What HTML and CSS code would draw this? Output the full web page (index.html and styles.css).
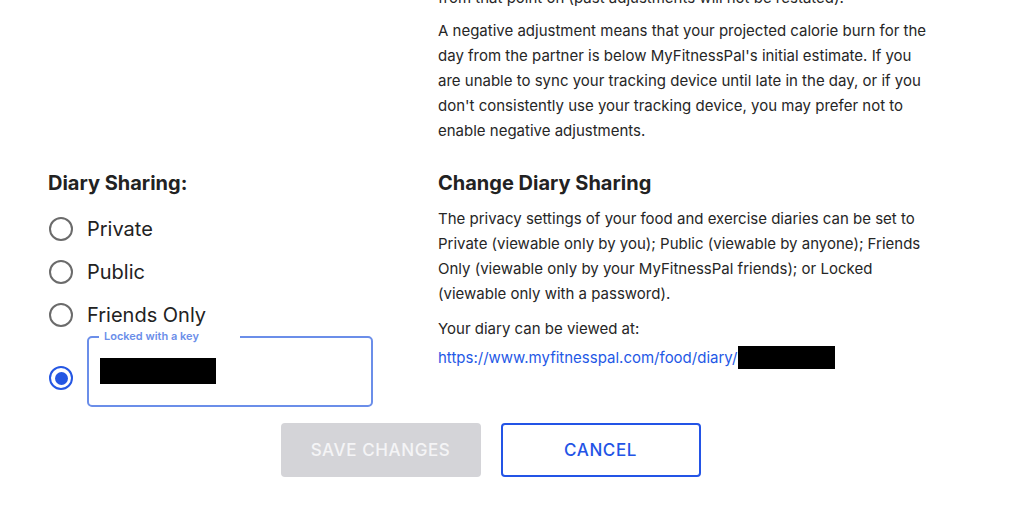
FILE: index.html
```html
<!DOCTYPE html>
<html lang="en">
<head>
<meta charset="utf-8">
<title>Diary Settings</title>
<link rel="stylesheet" href="styles.css">
</head>
<body>
<main class="page">
  <section class="row row-first">
    <div class="col-left"></div>
    <div class="col-right">
      <p class="text cut">from that point on (past adjustments will not be restated).</p>
      <p class="text">A negative adjustment means that your projected calorie burn for the day from the partner is below MyFitnessPal's initial estimate. If you are unable to sync your tracking device until late in the day, or if you don't consistently use your tracking device, you may prefer not to enable negative adjustments.</p>
    </div>
  </section>
  <section class="row">
    <div class="col-left">
      <h3 class="label-title">Diary Sharing:</h3>
      <div class="options">
        <label class="option"><span class="radio"></span><span class="option-text">Private</span></label>
        <label class="option"><span class="radio"></span><span class="option-text">Public</span></label>
        <label class="option"><span class="radio"></span><span class="option-text">Friends Only</span></label>
        <div class="option option-locked">
          <span class="radio radio-on"><span class="dot"></span></span>
          <fieldset class="key-field">
            <legend class="key-legend">Locked with a key</legend>
            <div class="redact redact-key"></div>
          </fieldset>
        </div>
      </div>
    </div>
    <div class="col-right">
      <h2 class="section-title">Change Diary Sharing</h2>
      <p class="text">The privacy settings of your food and exercise diaries can be set to Private (viewable only by you); Public (viewable by anyone); Friends Only (viewable only by your MyFitnessPal friends); or Locked (viewable only with a password).</p>
      <p class="text text-tight">Your diary can be viewed at:</p>
      <p class="text link-line"><a class="link" href="#">https://www.myfitnesspal.com/food/diary/</a><span class="redact redact-url"></span></p>
    </div>
  </section>
  <div class="actions">
    <button class="btn btn-save" type="button">Save Changes</button>
    <button class="btn btn-cancel" type="button">Cancel</button>
  </div>
</main>
</body>
</html>
```

FILE: styles.css
```css
* { box-sizing: border-box; }

body {
  margin: 0;
  background: #ffffff;
  font-family: Inter, "Noto Sans", "Liberation Sans", sans-serif;
  color: #222222;
}

.page {
  width: 885px;
  margin-left: 48px;
}

.row {
  display: grid;
  grid-template-columns: 390px 495px;
}

.row-first {
  margin-bottom: 28px;
}

.text {
  margin: 0;
  font-size: 15px;
  line-height: 25px;
  color: #262626;
}

.text + .text {
  margin-top: 8px;
}

.cut {
  margin-top: -15px;
}

.section-title {
  margin: 0 0 11px;
  font-size: 20px;
  line-height: 24px;
  font-weight: 700;
  color: #222;
}

.col-right .text-tight {
  margin-top: 10px;
}

.col-right .link-line {
  margin-top: 4px;
  display: flex;
  align-items: center;
}

.link {
  color: #1f59e6;
  text-decoration: none;
}

.redact {
  display: block;
  background: #000;
}

.redact-url {
  width: 97px;
  height: 23px;
  margin-left: 1px;
}

.label-title {
  margin: 0 0 12px;
  font-size: 20px;
  line-height: 24px;
  font-weight: 700;
  color: #222;
}

.options {
  display: flex;
  flex-direction: column;
}

.option {
  display: flex;
  align-items: center;
  height: 43px;
  padding-left: 1px;
}

.radio {
  width: 24px;
  height: 24px;
  border: 2px solid #6b6b6b;
  border-radius: 50%;
  flex: none;
  display: flex;
  align-items: center;
  justify-content: center;
}

.option-text {
  margin-left: 14px;
  font-size: 20px;
  line-height: 24px;
  color: #222;
}

.option-locked {
  height: auto;
  margin-top: -7px;
  align-items: flex-end;
}

.radio-on {
  border: 2.5px solid #2557e3;
  margin-bottom: 17px;
}

.dot {
  width: 13px;
  height: 13px;
  border-radius: 50%;
  background: #2557e3;
}

.key-field {
  margin: 0 0 0 14px;
  width: 286px;
  padding: 13px 11px 21px;
  border: 2px solid #6b8ee9;
  border-radius: 5px;
}

.key-legend {
  width: 141px;
  padding: 0 5px 2px;
  margin-left: -1px;
  font-size: 11px;
  line-height: 14px;
  font-weight: 600;
  color: #6b8ee9;
}

.redact-key {
  width: 116px;
  height: 26px;
}

.actions {
  display: flex;
  justify-content: center;
  gap: 20px;
  margin-top: 16px;
}

.btn {
  width: 200px;
  height: 54px;
  border-radius: 4px;
  font-family: Inter, "Noto Sans", "Liberation Sans", sans-serif;
  font-size: 17px;
  font-weight: 500;
  letter-spacing: 0.6px;
  text-transform: uppercase;
  cursor: pointer;
}

.btn-save {
  background: #d4d4d8;
  border: none;
  color: #f4f4f6;
}

.btn-cancel {
  background: #fff;
  border: 2px solid #2354e6;
  color: #2354e6;
}
```
